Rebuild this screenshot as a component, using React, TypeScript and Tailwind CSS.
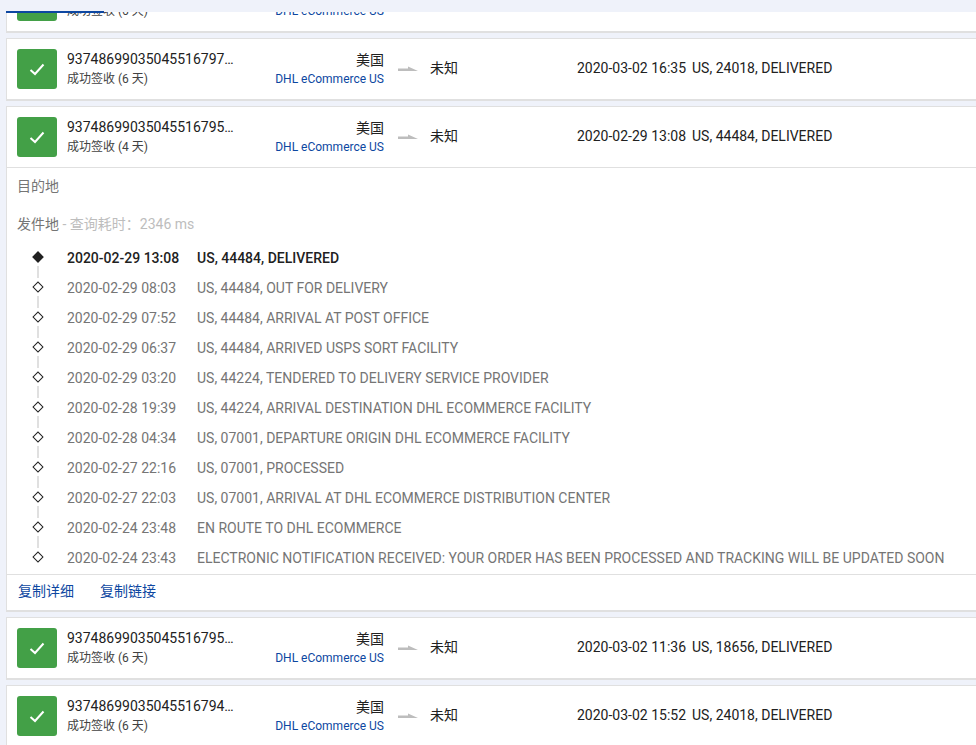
const FONT = "font-['Roboto','Noto_Sans_CJK_SC',sans-serif]";

type RowProps = {
  id: string;
  days: number;
  time: string;
  status: string;
  expanded?: boolean;
  children?: React.ReactNode;
};

const ArrowIcon = () => (
  <svg width="20" height="6" viewBox="0 0 20 6" className="shrink-0">
    <path d="M0 2.5 H10 V0.5 L20 5 H0 Z" fill="#bdbdbd" />
  </svg>
);

const CheckBox = () => (
  <div className="flex h-10 w-10 shrink-0 items-center justify-center rounded-[3px] bg-[#43a047]">
    <svg width="16" height="13" viewBox="0 0 16 13" fill="none">
      <path d="M1.5 7 L6 11 L14.5 1.5" stroke="#fff" strokeWidth="2" />
    </svg>
  </div>
);

const RowHead = ({ id, days, time, status, expanded }: RowProps) => (
  <div
    className={`flex items-center pl-[10px] ${
      expanded ? 'h-[61px] border-b border-[#e0e0e0]' : 'h-[60px]'
    }`}
  >
    <CheckBox />
    <div className="ml-[10px] w-[170px] shrink-0">
      <div className="text-[14px] leading-5 text-[#212121]">{id}</div>
      <div className="text-[12px] leading-5 text-[#424242]">
        成功签收 ({days} 天)
      </div>
    </div>
    <div className="w-[147px] shrink-0 text-right">
      <div className="h-5 pt-px text-[14px] leading-5 text-[#212121]">美国</div>
      <div className="text-[12px] leading-5 text-[#0d47a1]">
        DHL eCommerce US
      </div>
    </div>
    <div className="ml-[14px] flex">
      <ArrowIcon />
    </div>
    <div className="ml-3 w-[147px] shrink-0 pb-[2px] text-[14px] text-[#212121]">
      未知
    </div>
    <div className="whitespace-nowrap pb-[2px] text-[14px] text-[#212121]">
      {time}
      <span className="ml-[6px]">{status}</span>
    </div>
  </div>
);

const Row = (props: RowProps) => (
  <div className="mb-[5px] border-t border-b-2 border-l border-[#e0e0e0] bg-white">
    <RowHead {...props} />
    {props.children}
  </div>
);

const events = [
  ['2020-02-29 13:08', 'US, 44484, DELIVERED'],
  ['2020-02-29 08:03', 'US, 44484, OUT FOR DELIVERY'],
  ['2020-02-29 07:52', 'US, 44484, ARRIVAL AT POST OFFICE'],
  ['2020-02-29 06:37', 'US, 44484, ARRIVED USPS SORT FACILITY'],
  ['2020-02-29 03:20', 'US, 44224, TENDERED TO DELIVERY SERVICE PROVIDER'],
  ['2020-02-28 19:39', 'US, 44224, ARRIVAL DESTINATION DHL ECOMMERCE FACILITY'],
  ['2020-02-28 04:34', 'US, 07001, DEPARTURE ORIGIN DHL ECOMMERCE FACILITY'],
  ['2020-02-27 22:16', 'US, 07001, PROCESSED'],
  ['2020-02-27 22:03', 'US, 07001, ARRIVAL AT DHL ECOMMERCE DISTRIBUTION CENTER'],
  ['2020-02-24 23:48', 'EN ROUTE TO DHL ECOMMERCE'],
  [
    '2020-02-24 23:43',
    'ELECTRONIC NOTIFICATION RECEIVED: YOUR ORDER HAS BEEN PROCESSED AND TRACKING WILL BE UPDATED SOON',
  ],
];

const Timeline = () => (
  <div className="pl-[21px]">
    {events.map(([time, text], i) => (
      <div key={time} className="relative flex h-[30px] items-center">
        <div className="flex w-[20px] shrink-0 justify-center pb-[2px]">
          <div
            className={`h-[8px] w-[8px] rotate-45 border border-[#212121] ${
              i === 0 ? 'bg-[#212121]' : 'bg-white'
            }`}
          />
        </div>
        {i < events.length - 1 && (
          <div className="absolute left-[9px] top-[23px] h-[12px] w-[2px] bg-[#e0e0e0]" />
        )}
        <div
          className={`ml-[19px] w-[130px] shrink-0 text-[14px] ${
            i === 0 ? 'font-medium text-[#212121]' : 'text-[#757575]'
          }`}
        >
          {time}
        </div>
        <div
          className={`whitespace-nowrap text-[14px] ${
            i === 0 ? 'font-medium text-[#212121]' : 'text-[#757575]'
          }`}
        >
          {text}
        </div>
      </div>
    ))}
  </div>
);

const App = () => {
  return (
    <div
      className={`relative h-[745px] w-[976px] overflow-hidden bg-[#eff2fa] pl-[6px] ${FONT}`}
    >
      {/* sticky bar over the scrolled list */}
      <div className="absolute left-0 right-0 top-0 z-10 h-3 bg-[#eff2fa]">
        <div className="absolute -bottom-px left-[6px] h-[2px] w-[98px] bg-[#0d47a1]" />
      </div>
      <div className="-mt-[30px]">
        <Row id="93748699035045516798…" days={6} time="" status="" />
        <Row
          id="93748699035045516797…"
          days={6}
          time="2020-03-02 16:35"
          status="US, 24018, DELIVERED"
        />
        <Row
          id="93748699035045516795…"
          days={4}
          time="2020-02-29 13:08"
          status="US, 44484, DELIVERED"
          expanded
        >
          <div className="pl-[10px] pt-[8px] text-[14px] leading-5 text-[#757575]">
            目的地
          </div>
          <div className="pl-[10px] pt-[18px] text-[14px] leading-5 text-[#757575]">
            发件地
            <span className="text-[#bdbdbd]"> - 查询耗时：2346 ms</span>
          </div>
          <div className="pb-[1px] pt-[9px]">
            <Timeline />
          </div>
          <div className="flex h-[36px] items-center gap-[26px] border-t border-[#e0e0e0] pb-[2px] pl-[11px] text-[14px] text-[#0d47a1]">
            <span>复制详细</span>
            <span>复制链接</span>
          </div>
        </Row>
        <Row
          id="93748699035045516795…"
          days={6}
          time="2020-03-02 11:36"
          status="US, 18656, DELIVERED"
        />
        <Row
          id="93748699035045516794…"
          days={6}
          time="2020-03-02 15:52"
          status="US, 24018, DELIVERED"
        />
      </div>
    </div>
  );
};

export default App;
